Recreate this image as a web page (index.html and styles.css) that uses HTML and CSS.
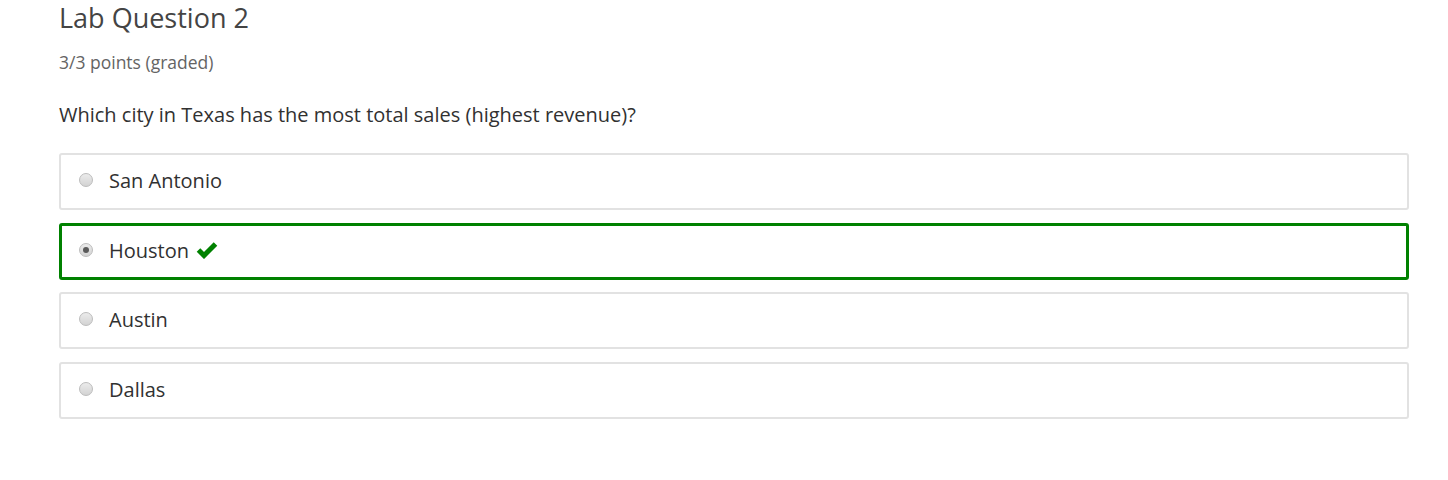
FILE: index.html
```html
<!DOCTYPE html>
<html>
<head>
<meta charset="utf-8">
<link rel="stylesheet" href="styles.css">
</head>
<body>
<div class="problem">
  <h2 class="title">Lab Question 2</h2>
  <div class="points">3/3 points (graded)</div>
  <p class="question">Which city in Texas has the most total sales (highest revenue)?</p>
  <div class="choices">
    <label class="choice"><span class="radio"></span><span class="label">San Antonio</span></label>
    <label class="choice correct"><span class="radio checked"></span><span class="label">Houston</span>
      <svg class="check" width="22" height="18" viewBox="0 0 22 18"><path d="M2.5 9 L8 14.5 L19.5 3" fill="none" stroke="#008100" stroke-width="5" stroke-linecap="butt" stroke-linejoin="miter"/></svg>
    </label>
    <label class="choice"><span class="radio"></span><span class="label">Austin</span></label>
    <label class="choice"><span class="radio"></span><span class="label">Dallas</span></label>
  </div>
</div>
</body>
</html>
```
FILE: styles.css
```css
html, body {
  margin: 0;
  padding: 0;
  background: #fff;
}
body {
  font-family: "Open Sans", "Liberation Sans", sans-serif;
}
.problem {
  padding: 0 39px 0 59px;
}
.title {
  margin: 0;
  font-size: 27px;
  font-weight: 400;
  line-height: 36px;
  color: #444;
}
.points {
  margin-top: 14px;
  font-size: 17.5px;
  line-height: 24px;
  color: #646464;
}
.question {
  margin: 27px 0 0;
  font-size: 20px;
  line-height: 28px;
  color: #313131;
}
.choices {
  margin-top: 24px;
  display: flex;
  flex-direction: column;
  gap: 12.67px;
}
.choice {
  display: flex;
  align-items: center;
  height: 57px;
  box-sizing: border-box;
  border: 2px solid #e2e2e2;
  border-radius: 3px;
  padding-left: 18px;
  padding-bottom: 1px;
  font-size: 20px;
  color: #313131;
}
.choice.correct {
  border: 3px solid #008100;
  padding-left: 17px;
}
.radio {
  width: 14px;
  height: 14px;
  border-radius: 50%;
  box-sizing: border-box;
  border: 1px solid #bcbcbc;
  background: linear-gradient(#ebebeb, #d3d3d3);
  margin-right: 16px;
  position: relative;
  top: -1px;
}
.radio.checked::after {
  content: "";
  position: absolute;
  left: 3px;
  top: 3px;
  width: 6px;
  height: 6px;
  border-radius: 50%;
  background: #5a5a5a;
}
.label {
  line-height: 28px;
}
.check {
  margin-left: 7px;
  position: relative;
  top: -1px;
}
```
